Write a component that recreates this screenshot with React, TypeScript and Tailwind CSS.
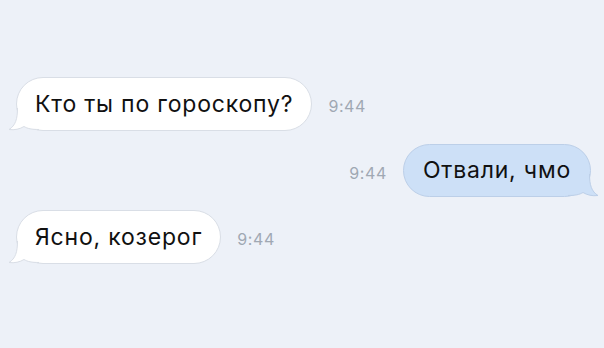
function Tail({ fill, stroke, flip }: { fill: string; stroke: string; flip?: boolean }) {
    return (
        <svg
            width="40"
            height="26"
            viewBox="0 0 40 26"
            className={flip ? "absolute -right-[10px] -bottom-[2px] -scale-x-100" : "absolute -left-[10px] -bottom-[2px]"}
        >
            <path d="M10.5 2 C10.5 13, 8.5 19.5, 2 23.5 C7.5 24.3, 13 23, 17 20.5 C20.5 22.6, 24.5 23.5, 32 23.5 L32 2 Z" fill={fill} />
            <path d="M10.5 2 C10.5 13, 8.5 19.5, 2 23.5 C7.5 24.3, 13 23, 17 20.5 C20.5 22.6, 24.5 23.5, 32 23.5" fill="none" stroke={stroke} strokeWidth="1" />
        </svg>
    );
}

function Incoming({ text }: { text: string }) {
    return (
        <div className="flex items-center gap-4">
            <div className="relative h-[54px] rounded-[27px] bg-white border border-[#d9dee6] px-[18px] flex items-center">
                <Tail fill="#ffffff" stroke="#d9dee6" />
                <span className="relative z-10 text-[23px] tracking-[0.8px] text-[#111]">{text}</span>
            </div>
            <span className="pt-1 text-[16px] tracking-[0.6px] text-[#a0a8b3]">9:44</span>
        </div>
    );
}

function Outgoing({ text }: { text: string }) {
    return (
        <div className="flex items-center justify-end gap-4">
            <span className="pt-1 text-[16px] tracking-[0.6px] text-[#a0a8b3]">9:44</span>
            <div className="relative h-[53px] rounded-[27px] bg-[#cde0f7] border border-[#bccfe8] px-[19px] flex items-center">
                <Tail fill="#cde0f7" stroke="#bccfe8" flip />
                <span className="relative z-10 text-[23px] tracking-[0.8px] text-[#111]">{text}</span>
            </div>
        </div>
    );
}

export default function App() {
    return (
        <div className="w-[604px] h-[348px] bg-[#edf1f8] overflow-hidden font-['Inter',sans-serif]">
            <div className="flex flex-col gap-[13px] pt-[77px] pl-4 pr-[13px]">
                <Incoming text="Кто ты по гороскопу?" />
                <Outgoing text="Отвали, чмо" />
                <Incoming text="Ясно, козерог" />
            </div>
        </div>
    );
}
